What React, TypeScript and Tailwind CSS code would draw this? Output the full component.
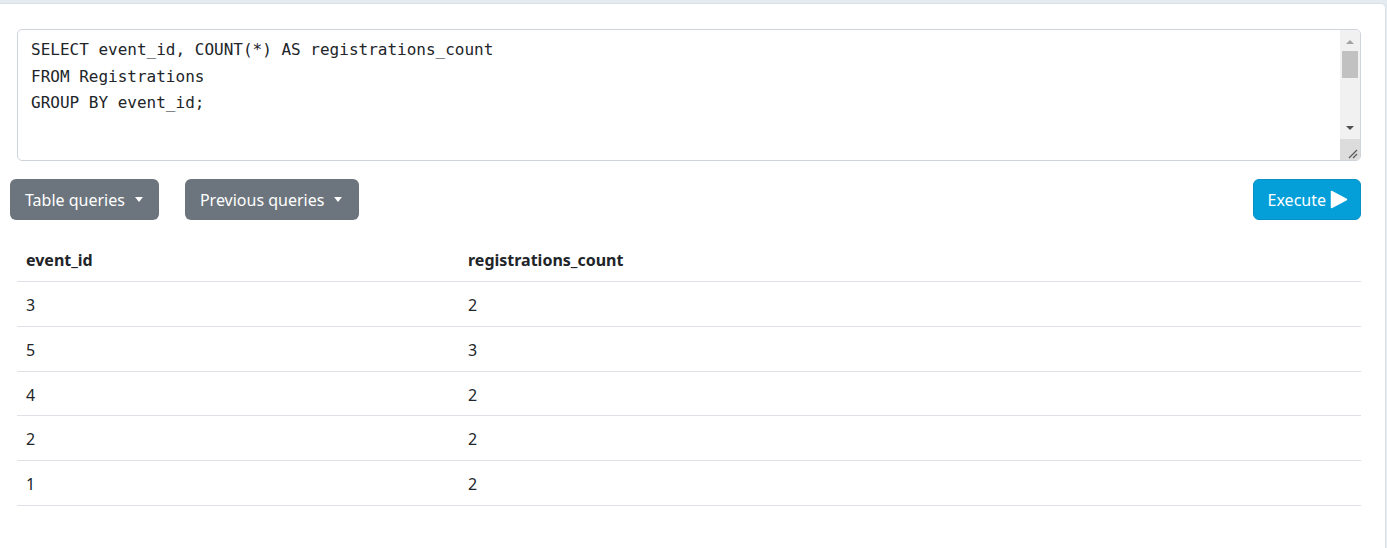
import React from "react";

const rows = [
  ["3", "2"],
  ["5", "3"],
  ["4", "2"],
  ["2", "2"],
  ["1", "2"],
];

function Caret() {
  return (
    <span className="ml-[10px] inline-block h-0 w-0 border-x-[4.5px] border-t-[5px] border-x-transparent border-t-white" />
  );
}

export default function App() {
  return (
    <div
      className="h-[548px] overflow-hidden bg-[#e5ecf1] pt-[3px] pr-[1px]"
      style={{ fontFamily: '"Noto Sans", "Open Sans", sans-serif' }}
    >
      <div className="-ml-px min-h-[570px] rounded-tr-[5px] border border-[#d9e1e8] bg-white pt-[25px]">
        {/* Editor */}
        <div className="pl-[17px] pr-[24px]">
          <div className="flex h-[132px] overflow-hidden rounded-[5px] border border-[#ced4da] bg-white">
            <div
              className="flex-1 whitespace-pre pl-[13px] pt-[7px] text-[16px] leading-[26.5px] text-[#212529]"
              style={{ fontFamily: '"DejaVu Sans Mono", "Liberation Mono", monospace' }}
            >
              {"SELECT event_id, COUNT(*) AS registrations_count\nFROM Registrations\nGROUP BY event_id;"}
            </div>
            <div className="flex w-[20px] flex-col bg-[#f1f1f1]">
              <div className="flex h-[17px] items-center justify-center pt-[6px]">
                <span className="inline-block h-0 w-0 border-x-[4px] border-b-[4px] border-x-transparent border-b-[#a3a3a3]" />
              </div>
              <div className="mx-[2px] mt-[4px] h-[27px] bg-[#c1c1c1]" />
              <div className="flex-1" />
              <div className="flex h-[17px] items-center justify-center pb-[6px]">
                <span className="inline-block h-0 w-0 border-x-[4px] border-t-[4px] border-x-transparent border-t-[#505050]" />
              </div>
              <div className="relative h-[21px] bg-[#dcdcdc]">
                <svg className="absolute bottom-[1px] right-[2px]" width="12" height="12" viewBox="0 0 12 12">
                  <path d="M11 3 L3 11 M11 7 L7 11" stroke="#5a5a5a" strokeWidth="1.2" />
                </svg>
              </div>
            </div>
          </div>
        </div>

        {/* Buttons */}
        <div className="mt-[18px] flex items-center pl-[10px] pr-[24px]">
          <button className="flex h-[41px] items-center rounded-[6px] bg-[#6c757d] pl-[15px] pr-[16px] text-[16px] text-white">
            Table queries
            <Caret />
          </button>
          <button className="ml-[26px] flex h-[41px] items-center rounded-[6px] bg-[#6c757d] pl-[15px] pr-[17px] text-[16px] text-white">
            Previous queries
            <Caret />
          </button>
          <div className="flex-1" />
          <button className="flex h-[41px] items-center rounded-[6px] border border-[#0891c6] bg-[#049fd9] pl-[14px] pr-[12px] text-[16px] text-white">
            Execute
            <svg className="ml-[4px]" width="18" height="19" viewBox="0 0 18 19">
              <path d="M1.5 1.5 L16.5 9.5 L1.5 17.5 Z" fill="white" stroke="white" strokeWidth="1.5" strokeLinejoin="round" />
            </svg>
          </button>
        </div>

        {/* Table */}
        <div className="mt-[17px] pl-[17px] pr-[24px] text-[16px] text-[#212529]">
          <div className="grid grid-cols-[443px_1fr] border-b border-[#dee2e6]">
            <div className="px-[9px] pb-[9px] pt-[11px] font-bold leading-[24px]">event_id</div>
            <div className="px-[8px] pb-[9px] pt-[11px] font-bold leading-[24px]">registrations_count</div>
          </div>
          {rows.map(([a, b], i) => (
            <div key={i} className="grid h-[44.8px] grid-cols-[443px_1fr] border-b border-[#dee2e6]">
              <div className="px-[9px] pb-[9px] pt-[11px] leading-[24px]">{a}</div>
              <div className="px-[8px] pb-[9px] pt-[11px] leading-[24px]">{b}</div>
            </div>
          ))}
        </div>
      </div>
    </div>
  );
}
